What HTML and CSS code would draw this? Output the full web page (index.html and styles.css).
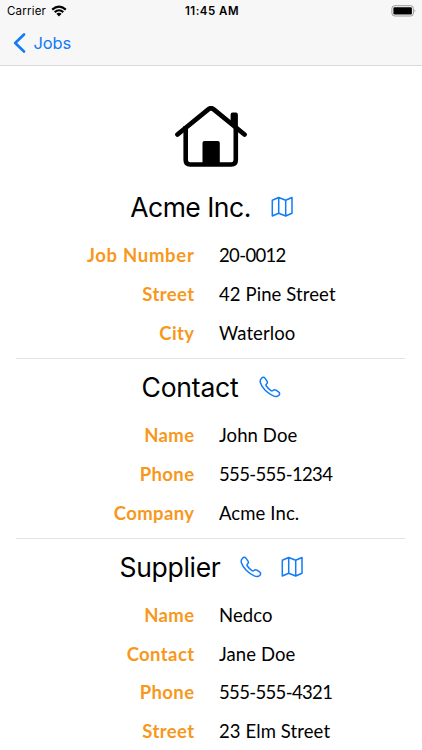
FILE: index.html
```html
<!DOCTYPE html>
<html lang="en">
<head>
<meta charset="utf-8">
<title>Acme Inc.</title>
<link rel="stylesheet" href="styles.css">
</head>
<body>
<svg class="symbols" aria-hidden="true">
  <symbol id="map" viewBox="0 0 22 22"><path d="M1.3 4.2 7.7 1.5 14.7 4.2 21 1.5V17.2L14.7 20 7.7 17.2 1.3 20ZM7.7 1.5V17.2M14.7 4.2V20"/></symbol>
  <symbol id="phone" viewBox="0 0 22 22"><path d="M2.4 2.5C3.7 1 5.1 1 6.1 2.4L8 5.1C8.8 6.3 8.4 7.1 7.5 8.1C6.8 8.8 6.8 9.3 7.3 10C8.6 11.8 10.1 13.3 12 14.7C12.7 15.2 13.2 15.2 13.9 14.5C14.9 13.6 15.7 13.3 16.9 14.1L19.5 15.9C20.9 16.9 21 18.2 19.7 19.5C18.4 20.7 17 20.9 14.8 20.1C11.6 18.9 8.9 17 6.2 14.3C3.6 11.6 2.2 9 1.4 6.7C.8 4.9 1.1 3.8 2.4 2.5Z"/></symbol>
</svg>
<header class="topbar">
  <div class="status">
    <div class="carrier"><span>Carrier</span>
      <svg class="wifi" viewBox="0 0 16 12"><path d="M1.2 4.6Q8-1.5 14.8 4.6M3.7 7.1Q8 3.4 12.3 7.1"/><path class="dot" d="M5.4 8.8Q8 6.8 10.6 8.8L8 11.4Z"/></svg>
    </div>
    <time class="time">11:45 AM</time>
    <svg class="battery" viewBox="0 0 26 12"><rect class="case" x=".9" y=".7" width="21.5" height="10.3" rx="2.8"/><rect x="2.4" y="2.2" width="18.5" height="7.3" rx="1.2"/><path class="tip" d="M23.7 4.2Q25.2 5.8 23.7 7.4Z"/></svg>
  </div>
  <a class="back"><svg class="chevron" viewBox="0 0 13 20"><path d="M11 1.5 2.2 10 11 18.5"/></svg><span>Jobs</span></a>
</header>
<main class="content">
  <svg class="house" viewBox="0 0 72 62">
    <path class="walls" d="M10.7 20V54Q10.7 58.5 15.2 58.5H56.3Q60.8 58.5 60.8 54V20"/>
    <path class="roof" d="M2.5 28.5 33.6 3.2Q36 1.4 38.4 3.2L69.5 28.5"/>
    <path d="M55.6 8.7Q55.6 6.6 57.7 6.6H60.8Q62.9 6.6 62.9 8.7V23L55.6 17ZM27.5 58V37Q27.5 35 29.5 35H42.8Q44.8 35 44.8 37V58Z"/>
  </svg>
  <section class="card">
    <h2 class="title job"><span>Acme Inc.</span><svg class="icon"><use href="#map"/></svg></h2>
    <dl class="rows">
      <dt class="wide">Job Number</dt><dd class="number">20-0012</dd>
      <dt>Street</dt><dd>42 Pine Street</dd>
      <dt>City</dt><dd>Waterloo</dd>
    </dl>
  </section>
  <section class="card">
    <h2 class="title contact"><span>Contact</span><svg class="icon"><use href="#phone"/></svg></h2>
    <dl class="rows">
      <dt>Name</dt><dd>John Doe</dd>
      <dt>Phone</dt><dd class="number">555-555-1234</dd>
      <dt>Company</dt><dd>Acme Inc.</dd>
    </dl>
  </section>
  <section class="card">
    <h2 class="title supplier"><span>Supplier</span><svg class="icon"><use href="#phone"/></svg><svg class="icon"><use href="#map"/></svg></h2>
    <dl class="rows">
      <dt>Name</dt><dd>Nedco</dd>
      <dt>Contact</dt><dd>Jane Doe</dd>
      <dt>Phone</dt><dd class="number">555-555-4321</dd>
      <dt>Street</dt><dd>23 Elm Street</dd>
    </dl>
  </section>
</main>
</body>
</html>
```
FILE: styles.css
```css
* { box-sizing: border-box; }
html, body { margin: 0; height: 100%; overflow: hidden; }
body { background: #fff; color: #000; font-family: Inter, "Liberation Sans", sans-serif; }
svg { display: block; flex: none; }
.symbols { display: none; }

.topbar { height: 66px; background: #f7f7f7; border-bottom: 1px solid #d9d9d9; }
.status { display: grid; grid-template-columns: 1fr auto 1fr; align-items: center; height: 22px; padding: 0 5px 0 7px; }
.carrier { display: flex; align-items: center; gap: 5px; font-size: 11.5px; letter-spacing: 0.2px; }
.wifi { width: 16px; height: 12px; fill: none; stroke: #000; stroke-width: 2.1; }
.wifi .dot { fill: #000; stroke: none; }
.time { font-size: 11.5px; font-weight: 600; letter-spacing: 0.5px; }
.battery { width: 26px; height: 12px; justify-self: end; }
.battery .case { fill: none; stroke: #999; stroke-width: 1; }
.battery .tip { fill: #888; }
.back { display: flex; align-items: center; gap: 8px; height: 42px; padding-left: 12.5px; color: #127bf5; font-size: 16.5px; letter-spacing: -0.1px; }
.chevron { width: 13px; height: 20px; fill: none; stroke: currentColor; stroke-width: 2.6; stroke-linecap: round; stroke-linejoin: round; }

.content { padding: 40.4px 17px 0 16px; }
.house { width: 72px; height: 62px; margin: 0 auto 10.6px; }

.house .walls { fill: none; stroke: #000; stroke-width: 4.6; }
.house .roof { fill: none; stroke: #000; stroke-width: 4.8; stroke-linecap: round; }

.card { padding-bottom: 5.8px; }
.card + .card { border-top: 1px solid #e3e3e3; }
.title { display: flex; justify-content: center; align-items: center; gap: 20px; height: 57px; margin: 0; font-size: 26.5px; font-weight: 400; line-height: 32px; letter-spacing: -0.5px; }
.job { padding-left: 2px; }
.contact { letter-spacing: -0.2px; padding-left: 1px; }
.supplier { letter-spacing: -0.3px; gap: 19px; padding-left: 1px; }
.icon { width: 22px; height: 22px; fill: none; stroke: #127bf5; stroke-width: 1.5; stroke-linejoin: round; }
.rows { display: grid; grid-template-columns: 178.5px 1fr; column-gap: 24.5px; grid-auto-rows: 38.7px; align-items: center; margin: 0; font-family: Lato, "Liberation Sans", sans-serif; font-size: 18.5px; line-height: 24px; }
.rows dt { color: #f7981d; font-weight: 700; text-align: right; letter-spacing: 0.4px; }
.rows .wide { letter-spacing: 0.7px; }
.rows dd { margin: 0; white-space: nowrap; letter-spacing: 0.1px; }
.rows .number { letter-spacing: -0.65px; }
```
